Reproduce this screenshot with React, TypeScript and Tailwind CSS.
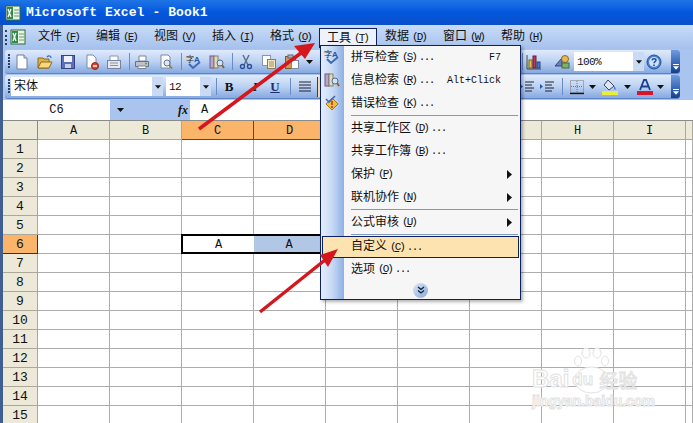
import React from 'react'

const columns = ['A', 'B', 'C', 'D', 'E', 'F', 'G', 'H', 'I', '']
const rows = Array.from({ length: 15 }, (_, i) => i + 1)
const mainMenu = [
    ['文件', 'F'],
    ['编辑', 'E'],
    ['视图', 'V'],
    ['插入', 'I'],
    ['格式', 'O'],
]
const sideMenu = [
    ['数据', 'D'],
    ['窗口', 'W'],
    ['帮助', 'H'],
]

const Latin = ({ children }: { children: React.ReactNode }) => (
    <span className="text-[11px] tracking-[-0.6px]">{children}</span>
)

const Hotkey = ({ k, dots }: { k: string; dots?: boolean }) => (
    <span className="text-[11px] ml-[3px]">
        <span className="tracking-[-2px]">
            (<span className="underline">{k}</span>)
        </span>
        {dots && <span className="tracking-[-1.6px] ml-[3px]">...</span>}
    </span>
)

const Grip = () => (
    <div className="flex flex-col gap-[1px] w-[2px] h-[16px] shrink-0">
        {[0, 1, 2, 3, 4].map((i) => (
            <div key={i} className="w-[2px] h-[2px] bg-[#27416f]" />
        ))}
    </div>
)

const Sep = ({ ml = 'ml-0' }: { ml?: string }) => <div className={`w-[1px] h-[17px] bg-[#6a8cc4] shrink-0 ${ml}`} />

const Icon = ({ children, className = '' }: { children: React.ReactNode; className?: string }) => (
    <svg viewBox="0 0 16 16" className={`w-[16px] h-[16px] shrink-0 ${className}`}>
        {children}
    </svg>
)

const NewIcon = ({ className }: { className?: string }) => (
    <Icon className={className}>
        <path d="M3 1h7l3 3v11H3z" fill="#fff" stroke="#6f7f9c" />
        <path d="M10 1v3h3" fill="#dfe6f2" stroke="#6f7f9c" />
    </Icon>
)
const OpenIcon = ({ className }: { className?: string }) => (
    <Icon className={className}>
        <path d="M1 4h5l1 1h5v9H1z" fill="#e0b04a" stroke="#8a6a20" />
        <path d="M1 14l3-6h11l-3 6z" fill="#f8d878" stroke="#8a6a20" />
        <path d="M10 3c2-2 4-1 4 1" fill="none" stroke="#2f6fc4" strokeWidth="1.3" />
    </Icon>
)
const SaveIcon = ({ className }: { className?: string }) => (
    <Icon className={className}>
        <rect x="1.500" y="1.500" width="13" height="13" fill="#5d6fb8" stroke="#36437f" />
        <rect x="4" y="2" width="8" height="6" fill="#f1f3fa" />
        <rect x="5" y="10" width="6" height="4" fill="#c9cfe4" />
    </Icon>
)
const PermIcon = ({ className }: { className?: string }) => (
    <Icon className={className}>
        <path d="M3 1h6l3 3v10H3z" fill="#fff" stroke="#7b8aa5" />
        <circle cx="11" cy="12" r="3.500" fill="#d8442e" stroke="#9a2415" />
        <rect x="9" y="11.300" width="4" height="1.400" fill="#fff" />
    </Icon>
)
const MailIcon = ({ className }: { className?: string }) => (
    <Icon className={className}>
        <path d="M4 2h8v5H4z" fill="#fff" stroke="#8a94a8" />
        <rect x="1.500" y="6.500" width="13" height="8" fill="#e4e7ee" stroke="#77839b" />
        <path d="M4 9h8M4 11.500h8" stroke="#8a94a8" />
    </Icon>
)
const PrintIcon = ({ className }: { className?: string }) => (
    <Icon className={className}>
        <path d="M5 2h7v5H5z" fill="#fff" stroke="#7d8594" />
        <path d="M1.500 7.500h13v5h-13z" fill="#bcc3cf" stroke="#667080" />
        <path d="M4 12h8v2.500H4z" fill="#fff" stroke="#7d8594" />
        <circle cx="12" cy="9.500" r="1" fill="#3cae4c" />
    </Icon>
)
const PreviewIcon = ({ className }: { className?: string }) => (
    <Icon className={className}>
        <path d="M3 1h7l2 2v11H3z" fill="#fff" stroke="#7d8aa2" />
        <circle cx="9" cy="9" r="3" fill="#dce9f8" stroke="#66758e" />
        <path d="M11 11l3 3.500" stroke="#a8752c" strokeWidth="1.800" />
    </Icon>
)
const SpellIcon = ({ className }: { className?: string }) => (
    <Icon className={className}>
        <text x="0" y="8" fontSize="8" fill="#222" fontFamily="Noto Sans CJK SC">字</text>
        <text x="8" y="8" fontSize="8" fill="#2556a8" fontWeight="700" fontFamily="Liberation Sans">A</text>
        <path d="M3 10l4 4 7-6" fill="none" stroke="#4169b4" strokeWidth="2" />
    </Icon>
)
const ResearchIcon = ({ className }: { className?: string }) => (
    <Icon className={className}>
        <rect x="1" y="2" width="4" height="12" fill="#b7a6cf" stroke="#6a5a8a" />
        <rect x="5" y="2" width="4" height="12" fill="#e2d9c0" stroke="#8a7f5c" />
        <circle cx="11" cy="9" r="3" fill="#cfe2f6" stroke="#556b8c" />
        <path d="M13 11l2 3" stroke="#8a6428" strokeWidth="2" />
    </Icon>
)
const CutIcon = ({ className }: { className?: string }) => (
    <Icon className={className}>
        <path d="M5 1l5 10M11 1L6 11" stroke="#5f6f8c" strokeWidth="1.500" />
        <circle cx="4.500" cy="12.500" r="2" fill="none" stroke="#2b4f96" strokeWidth="1.400" />
        <circle cx="11.500" cy="12.500" r="2" fill="none" stroke="#2b4f96" strokeWidth="1.400" />
    </Icon>
)
const CopyIcon = ({ className }: { className?: string }) => (
    <Icon className={className}>
        <rect x="1.500" y="1.500" width="8" height="10" fill="#fff" stroke="#8a94a8" />
        <rect x="6.500" y="5.500" width="8" height="9" fill="#f6e7b8" stroke="#8a7d5a" />
        <path d="M8 8h5M8 10h5M8 12h5" stroke="#9a8f70" />
    </Icon>
)
const PasteIcon = ({ className }: { className?: string }) => (
    <Icon className={className}>
        <rect x="1.500" y="2.500" width="10" height="12" fill="#c99a55" stroke="#7d5b28" />
        <rect x="4" y="1" width="5" height="3" fill="#aab2c0" stroke="#667" />
        <rect x="7.500" y="6.500" width="7" height="8" fill="#fff" stroke="#7d8aa2" />
    </Icon>
)
const Caret = ({ className = '' }: { className?: string }) => (
    <svg viewBox="0 0 7 4" className={`w-[7px] h-[4px] shrink-0 ${className}`}>
        <path d="M0 0h7L3.500 4z" fill="#111" />
    </svg>
)
const ChartIcon = ({ className }: { className?: string }) => (
    <Icon className={className}>
        <path d="M1 1v14h14" fill="none" stroke="#444" />
        <rect x="3" y="6" width="3" height="8" fill="#e8c23a" stroke="#7a6518" />
        <rect x="7" y="2" width="3" height="12" fill="#b53a5a" stroke="#6b1d33" />
        <rect x="11" y="8" width="3" height="6" fill="#4a78c8" stroke="#24467f" />
    </Icon>
)
const DrawIcon = ({ className }: { className?: string }) => (
    <Icon className={className}>
        <path d="M1 12l7-8v8z" fill="#6a7fc8" stroke="#36437f" />
        <circle cx="11" cy="5" r="3.500" fill="#e7b94e" stroke="#8a6a20" />
        <rect x="8" y="9" width="7" height="5" fill="#7fb06a" stroke="#456b36" />
    </Icon>
)
const HelpIcon = ({ className }: { className?: string }) => (
    <Icon className={className}>
        <circle cx="8" cy="8" r="7" fill="#4a82d8" stroke="#1f4f9f" />
        <circle cx="8" cy="8" r="5" fill="#cfe0f8" />
        <path d="M6 6.300c.3-2 4-2 4 0 0 1.500-2 1.300-2 3" fill="none" stroke="#1f4f9f" strokeWidth="1.500" />
        <rect x="7.200" y="10.500" width="1.600" height="1.600" fill="#1f4f9f" />
    </Icon>
)
const ExcelIcon = ({ className }: { className?: string }) => (
    <Icon className={className}>
        <rect x="1" y="1" width="14" height="14" fill="#e8f3e0" stroke="#2d6a3a" />
        <rect x="2" y="2" width="6" height="12" fill="#2f8a4a" />
        <path d="M3 4l3 8M6 4l-3 8" stroke="#fff" strokeWidth="1.300" />
        <path d="M9 5h5M9 8h5M9 11h5" stroke="#6d9c78" />
    </Icon>
)
const BordersIcon = ({ className }: { className?: string }) => (
    <Icon className={className}>
        <rect x="1.500" y="1.500" width="13" height="12" fill="none" stroke="#777" strokeDasharray="1 1" />
        <path d="M8 2v11M2 7.500h12" stroke="#777" strokeDasharray="1 1" />
        <path d="M1 14.500h14" stroke="#111" strokeWidth="1.300" />
    </Icon>
)
const FillIcon = ({ className }: { className?: string }) => (
    <Icon className={className}>
        <path d="M6 1l6 6-5 4-5-5z" fill="#dce6f4" stroke="#445" />
        <path d="M12 7c2 2 2 3 1 4-1-1-1-2-1-4z" fill="#3a70c0" />
        <rect x="0" y="12" width="16" height="4" fill="#ecec3a" />
    </Icon>
)
const FontColorIcon = ({ className }: { className?: string }) => (
    <Icon className={className}>
        <path d="M3 11L7 1h2l4 10M5 7.500h6" fill="none" stroke="#1c3f8f" strokeWidth="1.800" />
        <rect x="0" y="12" width="16" height="4" fill="#d4172a" />
    </Icon>
)
const AlignLines = ({ className, indent }: { className?: string; indent?: boolean }) => (
    <Icon className={className}>
        <path
            d={indent ? 'M6 3h9M6 6h7M6 9h9M6 12h7' : 'M2 3h12M2 6h12M2 9h12M2 12h12'}
            stroke="#223"
        />
        {indent && <path d="M1 5l3 2.500L1 10z" fill="#2a55a8" />}
    </Icon>
)
const Chevron = () => (
    <div className="w-[9px] h-full rounded-r-[3px] bg-gradient-to-b from-[#6f9ce0] to-[#123f8f] flex flex-col items-center justify-end pb-[3px] shrink-0">
        <div className="w-[6px] h-[1px] bg-white mb-[1px]" />
        <svg viewBox="0 0 7 4" className="w-[6px] h-[4px] shrink-0">
            <path d="M0 0h7L3.500 4z" fill="#fff" />
        </svg>
    </div>
)
const Combo = ({ children, className }: { children: React.ReactNode; className: string }) => (
    <div className={`h-[19px] bg-white flex items-center justify-between pl-[3px] shrink-0 ${className}`}>
        <span className="text-[12px] whitespace-nowrap">{children}</span>
        <div className="w-[11px] h-full bg-[#c9daf5] flex items-center justify-center">
            <svg viewBox="0 0 7 4" className="w-[6px] h-[4px] shrink-0">
                <path d="M0 0h7L3.500 4z" fill="#111" />
            </svg>
        </div>
    </div>
)

const Toolbar = ({ children }: { children: React.ReactNode }) => (
    <div className="h-[24px] flex items-center pl-[2px] pr-[13px]">
        <div className="w-full h-full flex items-center rounded-[3px] bg-gradient-to-b from-[#dfeafb] via-[#bcd2f3] to-[#86a9e0] border-b border-[#5f86c4] pl-[3px]">
            {children}
        </div>
    </div>
)

const MenuRow = ({ label, k, dots = true, shortcut, arrow, active }: { label: string; k: string; dots?: boolean; shortcut?: string; arrow?: boolean; active?: boolean }) => (
    <div
        className={`flex items-center text-[12px] shrink-0 ${
            active
                ? 'h-[22px] bg-[#fde3b0] border border-[#0d2060] ml-[1px] mr-[1px] pl-[28px] pr-[7px]'
                : 'h-[23px] pl-[30px] pr-[8px]'
        }`}
    >
        <span>{label}</span>
        <Hotkey k={k} dots={dots} />
        {shortcut && <span className="ml-auto pr-[11px] text-[10px]">{shortcut}</span>}
        {arrow && (
            <svg viewBox="0 0 5 9" className="ml-auto w-[5px] h-[9px]">
                <path d="M0 0l5 4.500L0 9z" fill="#111" />
            </svg>
        )}
    </div>
)

const MenuSep = () => <div className="h-[1px] bg-[#7f99c0] ml-[30px] mr-[2px] mb-[1px] shrink-0" />

const App = () => {
    return (
        <div className="relative w-[693px] h-[423px] overflow-hidden bg-white text-[#111] font-['Liberation_Mono','Noto_Sans_CJK_SC',monospace]">
            {/* title bar */}
            <div className="h-[25px] flex items-center pl-[5px] gap-[5px] bg-gradient-to-b from-[#1f74e6] via-[#0357de] to-[#0a4fc8]">
                <ExcelIcon />
                <span className="text-white font-bold text-[13px] tracking-[0.1px] whitespace-nowrap">Microsoft Excel - Book1</span>
            </div>

            <div className="border-l-[3px] border-[#3f5f92]">
                {/* menu bar + toolbars */}
                <div className="bg-[#a9c4ee]">
                    <div className="h-[24px] flex items-center text-[12px] bg-gradient-to-b from-[#c9dcf8] to-[#a5c1ec]">
                        <div className="w-[2px] ml-[2px] h-[15px] border-l-2 border-dotted border-[#27416f]" />
                        <ExcelIcon className="ml-[3px]" />
                        <div className="flex ml-[12px] gap-[16px]">
                            {mainMenu.map(([label, k]) => (
                                <span key={label} className="whitespace-nowrap w-[42px]">
                                    {label}
                                    <Hotkey k={k} />
                                </span>
                            ))}
                        </div>
                        <div className="ml-[7px] w-[58px] h-[20px] mt-[2px] bg-[#eef3fb] border border-b-0 border-[#0d2060] flex items-center pl-[7px] whitespace-nowrap">
                            工具
                            <Hotkey k="T" />
                        </div>
                        <div className="flex ml-[8px] gap-[16px]">
                            {sideMenu.map(([label, k]) => (
                                <span key={label} className="whitespace-nowrap w-[42px]">
                                    {label}
                                    <Hotkey k={k} />
                                </span>
                            ))}
                        </div>
                    </div>

                    <div className="h-[1px]" />
                    <Toolbar>
                        <Grip />
                        <NewIcon className="ml-[4px]" />
                        <OpenIcon className="ml-[7px]" />
                        <SaveIcon className="ml-[7px]" />
                        <PermIcon className="ml-[8px]" />
                        <MailIcon className="ml-[6px]" />
                        <Sep ml="ml-[7px]" />
                        <PrintIcon className="ml-[4px]" />
                        <PreviewIcon className="ml-[8px]" />
                        <Sep ml="ml-[7px]" />
                        <SpellIcon className="ml-[4px]" />
                        <ResearchIcon className="ml-[7px]" />
                        <Sep ml="ml-[7px]" />
                        <CutIcon className="ml-[5px]" />
                        <CopyIcon className="ml-[7px]" />
                        <PasteIcon className="ml-[7px]" />
                        <Caret className="ml-[6px]" />
                        <div className="ml-auto flex items-center h-full">
                            <Sep />
                            <ChartIcon className="ml-[3px]" />
                            <DrawIcon className="ml-[12px]" />
                            <Combo className="ml-[4px] w-[70px]">
                                <Latin>100%</Latin>
                            </Combo>
                            <HelpIcon className="ml-[2px]" />
                            <div className="w-[9px]" />
                            <Chevron />
                        </div>
                    </Toolbar>
                    <div className="h-[1px]" />
                    <Toolbar>
                        <Grip />
                        <Combo className="ml-[1px] w-[152px]">宋体</Combo>
                        <Combo className="ml-[3px] w-[45px]">
                            <Latin>12</Latin>
                        </Combo>
                        <Sep ml="ml-[5px]" />
                        <span className="ml-[5px] w-[14px] text-center font-bold text-[13px] font-['Liberation_Serif',serif]">B</span>
                        <span className="ml-[14px] w-[10px] text-center italic font-bold text-[13px] font-['Liberation_Serif',serif]">I</span>
                        <span className="ml-[8px] w-[14px] text-center underline font-bold text-[13px] text-[#1d2f70] font-['Liberation_Serif',serif]">U</span>
                        <Sep ml="ml-[8px]" />
                        <AlignLines className="ml-[6px]" />
                        <div className="ml-[4px] w-[3px] h-[20px] bg-[#f3d9ae] border-l border-[#27416f]" />
                        <div className="ml-auto flex items-center h-full">
                            <AlignLines indent />
                            <AlignLines indent className="ml-[4px]" />
                            <Sep ml="ml-[7px]" />
                            <BordersIcon className="ml-[6px]" />
                            <Caret className="ml-[4px]" />
                            <FillIcon className="ml-[6px]" />
                            <Caret className="ml-[6px]" />
                            <FontColorIcon className="ml-[6px]" />
                            <Caret className="ml-[4px]" />
                            <div className="w-[7px]" />
                            <Chevron />
                        </div>
                    </Toolbar>
                    <div className="h-[1px]" />
                </div>

                {/* formula bar */}
                <div className="h-[21px] flex items-center bg-white text-[12px] border-b border-[#8a8a8a]">
                    <div className="w-[107px] text-center shrink-0">C6</div>
                    <div className="w-[80px] h-full bg-[#a9c4ee] flex items-center pl-[7px] shrink-0">
                        <Caret />
                        <span className="ml-[54px] italic font-bold text-[12px] font-['Liberation_Serif',serif]">fx</span>
                    </div>
                    <span className="ml-[11px]">A</span>
                </div>

                {/* sheet */}
                <div className="grid grid-cols-[35px_repeat(9,72px)_7px] auto-rows-[19px] text-[12px]">
                    <div className="bg-[#ece9d8] border-r border-b border-[#8f8c78]" />
                    {columns.map((c, i) => (
                        <div
                            key={i}
                            className={`flex items-center justify-center pt-[2px] border-r border-b ${c === 'C' || c === 'D' ? 'bg-[#fbb56b] border-[#5a4a30]' : 'bg-[#ece9d8] border-[#aca899]'}`}
                        >
                            {c}
                        </div>
                    ))}
                    {rows.map((r) => (
                        <React.Fragment key={r}>
                            <div
                                className={`flex items-center justify-center pt-[2px] text-[13px] border-r border-b ${r === 6 ? 'bg-[#fbb56b] border-[#3a3020]' : 'bg-[#ece9d8] border-[#aca899]'}`}
                            >
                                {r}
                            </div>
                            {columns.map((c, i) => {
                                const isC6 = r === 6 && c === 'C'
                                const isD6 = r === 6 && c === 'D'
                                return (
                                    <div
                                        key={i}
                                        className={`flex items-center justify-center pt-[1px] ${
                                            isC6
                                                ? 'border-[2px] border-r-0 border-black -ml-[1px] -mt-[1px]'
                                                : isD6
                                                  ? 'border-y-[2px] border-r-[2px] border-black bg-[#b2c6e6] -mt-[1px]'
                                                  : 'border-r border-b border-[#adadad]'
                                        }`}
                                    >
                                        {isC6 || isD6 ? 'A' : ''}
                                    </div>
                                )
                            })}
                        </React.Fragment>
                    ))}
                </div>
            </div>

            {/* open tools menu */}
            <div className="absolute left-[320px] top-[45px] w-[201px] h-[255px] bg-[#f6f6f6] border border-[#0d2060] shadow-[2px_2px_3px_rgba(0,0,0,0.3)]">
                <div className="absolute left-0 top-0 bottom-0 w-[23px] bg-gradient-to-r from-[#e4eefc] via-[#c5d9f5] to-[#8fb0e2]" />
                <div className="relative flex flex-col h-full">
                    <MenuRow label="拼写检查" k="S" shortcut="F7" />
                    <MenuRow label="信息检索" k="R" shortcut="Alt+Click" />
                    <MenuRow label="错误检查" k="K" />
                    <MenuSep />
                    <MenuRow label="共享工作区" k="D" />
                    <MenuRow label="共享工作簿" k="B" />
                    <MenuRow label="保护" k="P" dots={false} arrow />
                    <MenuRow label="联机协作" k="N" dots={false} arrow />
                    <MenuSep />
                    <MenuRow label="公式审核" k="U" dots={false} arrow />
                    <MenuSep />
                    <MenuRow label="自定义" k="C" active />
                    <MenuRow label="选项" k="O" />
                    <div className="flex-1 flex items-center justify-center">
                        <div className="w-[15px] h-[15px] rounded-full bg-gradient-to-br from-[#dce8f8] to-[#8aa8d8] flex items-center justify-center">
                            <svg viewBox="0 0 8 8" className="w-[8px] h-[8px]">
                                <path d="M1 1l3 2.500L7 1M1 4.500L4 7l3-2.500" fill="none" stroke="#10203f" strokeWidth="1.300" />
                            </svg>
                        </div>
                    </div>
                    <div className="absolute left-[3px] top-[3px] flex flex-col gap-[7px]">
                        <SpellIcon />
                        <ResearchIcon />
                        <svg viewBox="0 0 16 16" className="w-[16px] h-[16px]">
                            <path d="M8 3l6 6-6 6-6-6z" fill="#f0c040" stroke="#a87a18" />
                            <path d="M8 6v4M8 11v2" stroke="#c8321e" strokeWidth="1.600" />
                            <path d="M2 4l3 3 6-6" fill="none" stroke="#4169b4" strokeWidth="1.600" />
                        </svg>
                    </div>
                </div>
            </div>

            {/* annotation arrows */}
            <svg viewBox="0 0 693 423" className="absolute inset-0 w-[693px] h-[423px] pointer-events-none">
                <path d="M199 129L301 53" stroke="#d5171d" strokeWidth="3.500" />
                <path d="M315 43L294 46L305 59z" fill="#d5171d" />
                <path d="M260 312L325 260" stroke="#d5171d" strokeWidth="3.500" />
                <path d="M338 249L320 255L328 267z" fill="#d5171d" />
            </svg>

            {/* watermark */}
            <div className="absolute left-[532px] top-[347px] w-[130px] h-[66px] pointer-events-none">
                <svg viewBox="0 0 37 48" className="absolute left-[41px] top-0 w-[37px] h-[48px]">
                    <g fill="#fff" stroke="#e2e2e2">
                        <ellipse cx="5" cy="14" rx="3.500" ry="5" />
                        <ellipse cx="13" cy="6" rx="4" ry="5" />
                        <ellipse cx="24" cy="6" rx="4" ry="5" />
                        <ellipse cx="32" cy="14" rx="3.500" ry="5" />
                        <ellipse cx="18.500" cy="33" rx="17" ry="13" />
                    </g>
                </svg>
                <div className="absolute left-0 top-[20px] flex items-center leading-none whitespace-nowrap text-white [-webkit-text-stroke:1px_#e2e2e2] font-['Liberation_Sans',sans-serif]">
                    <span className="text-[24px] font-bold">Bai</span>
                    <span className="text-[17px] font-bold ml-[3px]">du</span>
                    <span className="text-[19px] ml-[6px] font-['Noto_Sans_CJK_SC',sans-serif]">经验</span>
                </div>
                <div className="absolute left-0 top-[47px] leading-none whitespace-nowrap text-[14px] font-bold text-white [-webkit-text-stroke:1px_#e2e2e2] font-['Liberation_Sans',sans-serif]">
                    jingyan.baidu.com
                </div>
            </div>
        </div>
    )
}

export default App
